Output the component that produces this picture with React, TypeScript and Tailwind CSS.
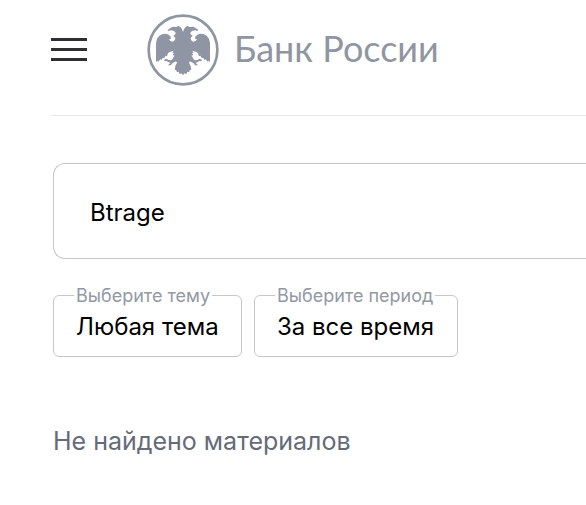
function EagleHalf() {
  return (
    <path d="M129 72 L126 64 L121 57 L115 54 L109 57 L98 56 L91 60 L83 66 L85 69 L93 67 L102 69 L107 74 L106 79 L100 84 L106 89 L105 96 L99 101 L91 99 L87 94 L93 92 L92 86 L86 80 L78 77 L68 78 L58 83 L51 92 L48 105 L48 162 L53 158 L55 161 L61 154 L64 156 L69 149 L72 151 L77 143 L81 145 L84 135 L91 131 L101 128 L97 134 L102 135 L98 141 L104 143 L100 148 L98 153 L93 157 L86 156 L79 152 L71 156 L75 160 L80 159 L84 162 L91 164 L88 168 L83 172 L93 172 L97 166 L103 163 L108 160 L111 164 L106 174 L104 187 L108 185 L111 193 L116 191 L119 199 L124 196 L130 202 Z" />
  );
}

function Emblem() {
  return (
    <svg viewBox="21 18 216 216" className="size-18 shrink-0" aria-hidden="true">
      <circle cx="129" cy="126" r="103" fill="none" stroke="currentColor" strokeWidth="8" />
      <g fill="currentColor">
        <EagleHalf />
        <g transform="translate(258 0) scale(-1 1)">
          <EagleHalf />
        </g>
      </g>
    </svg>
  );
}

function Filter({ id, label, value }: { id: string; label: string; value: string }) {
  return (
    <div className="relative rounded-md border border-[#c6c7cb]">
      <label
        htmlFor={id}
        className="absolute -top-3 left-5 bg-white px-0.5 text-lg leading-6 whitespace-nowrap text-[#9298a4]"
      >
        {label}
      </label>
      <select id={id} className="block h-15 appearance-none bg-transparent px-[22px] pt-0.5 text-2xl text-black outline-none">
        <option>{value}</option>
      </select>
    </div>
  );
}

export default function App() {
  return (
    <div className="overflow-hidden bg-white pl-[51px] font-['Inter','Noto_Sans',sans-serif]">
      <header className="flex h-29 items-start gap-15 border-b border-[#e7e7e8] pt-3.5">
        <button type="button" aria-label="Меню" className="mt-6 flex w-9 flex-col gap-[7px]">
          <span className="h-[3px] w-full bg-[#2f2f33]" />
          <span className="h-[3px] w-full bg-[#2f2f33]" />
          <span className="h-[3px] w-full bg-[#2f2f33]" />
        </button>
        <a href="#" className="flex items-center gap-[15px] text-[#9095a3]">
          <Emblem />
          <span className="pb-1 font-['Lato','Open_Sans',sans-serif] text-4xl whitespace-nowrap">Банк России</span>
        </a>
      </header>
      <main className="pt-[47px] pl-0.5">
        <input
          type="text"
          aria-label="Поиск"
          defaultValue="Btrage"
          className="block h-24 w-full rounded-l-xl border border-r-0 border-[#c6c7cb] px-9 pt-0.5 text-2xl text-black outline-none"
        />
        <div className="mt-9 flex gap-3">
          <Filter id="topic" label="Выберите тему" value="Любая тема" />
          <Filter id="period" label="Выберите период" value="За все время" />
        </div>
        <p className="mt-17 pb-12 text-[25px] leading-8 text-[#656b78]">Не найдено материалов</p>
      </main>
    </div>
  );
}
